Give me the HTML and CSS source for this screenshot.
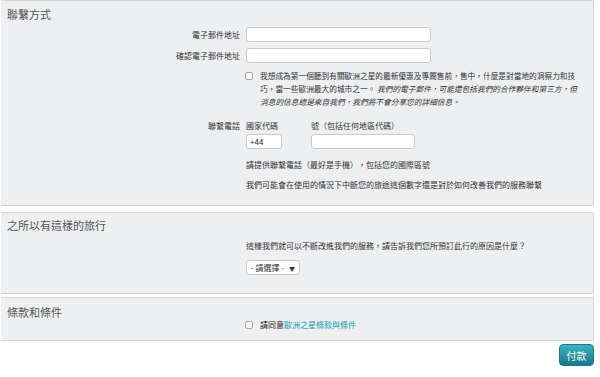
FILE: index.html
```html
<!DOCTYPE html>
<html lang="zh-Hant">
<head>
  <meta charset="UTF-8">
  <title>聯繫方式</title>
  <meta name="viewport" content="width=device-width, initial-scale=1.0">
  <link rel="stylesheet" href="styles.css">
</head>
<body>
  <div class="page">
    <section class="panel panel-contact">
      <h2>聯繫方式</h2>

      <div class="row">
        <label class="row-label" for="email">電子郵件地址</label>
        <input type="text" id="email" class="field field-wide">
      </div>

      <div class="row">
        <label class="row-label" for="email2">確認電子郵件地址</label>
        <input type="text" id="email2" class="field field-wide">
      </div>

      <div class="row row-top optin">
        <span class="row-label"></span>
        <span class="box"></span>
        <p class="optin-text">我想成為第一個聽到有關歐洲之星的最新優惠及專屬售前，售中，什麼是對當地的洞察力和技<br>巧，當一些歐洲最大的城市之一。 <em>我們的電子郵件，可能還包括我們的合作夥伴和第三方，但<br>消息的信息總是來自我們，我們將不會分享您的詳細信息。</em></p>
      </div>

      <div class="row row-top phone">
        <span class="row-label phone-label">聯繫電話</span>
        <div class="phone-col">
          <span class="small-label">國家代碼</span>
          <input type="text" class="field field-code" value="+44">
        </div>
        <div class="phone-col">
          <span class="small-label">號（包括任何地區代碼）</span>
          <input type="text" class="field field-number">
        </div>
      </div>

      <p class="note note-first">請提供聯繫電話（最好是手機），包括您的國際區號</p>
      <p class="note">我們可能會在使用的情況下中斷您的旅途這個數字還是對於如何改善我們的服務聯繫</p>
    </section>

    <section class="panel panel-reason">
      <h2>之所以有這樣的旅行</h2>
      <p class="note">這樣我們就可以不斷改進我們的服務，請告訴我們您所預訂此行的原因是什麼？</p>
      <div class="select">- 請選擇 - <span class="caret">▼</span></div>
    </section>

    <section class="panel panel-terms">
      <h2>條款和條件</h2>
      <div class="terms">
        <span class="box"></span>
        <span class="terms-text">請同意<a href="#">歐洲之星條款與條件</a></span>
      </div>
    </section>

    <div class="actions">
      <button class="button">付款</button>
    </div>
  </div>
</body>
</html>
```

FILE: styles.css
```css
body {
  margin: 0;
  font-family: "Noto Sans CJK TC", "Noto Sans", sans-serif;
  color: #333;
  background: #fff;
}

.page {
  width: 593px;
  margin-left: 1px;
}

.panel {
  background-color: #eeeff1;
  border: 1px solid #d4d5d7;
  border-left: none;
  box-sizing: border-box;
}

.panel h2 {
  margin: 0;
  padding-left: 6px;
  font-size: 11px;
  font-weight: normal;
  line-height: 14px;
  color: #555;
}

.panel-contact {
  height: 206px;
  padding-top: 6px;
}

.panel-reason {
  height: 82px;
  margin-top: 6px;
  padding-top: 5px;
}

.panel-terms {
  height: 44px;
  margin-top: 3px;
  padding-top: 7px;
}

.row {
  display: flex;
  align-items: center;
  margin-top: 6px;
  font-size: 8px;
}

.row-label {
  width: 245px;
  flex: none;
  text-align: right;
  padding-right: 6px;
  box-sizing: border-box;
  color: #333;
}

.row-top {
  align-items: flex-start;
}

.field {
  height: 15px;
  border: 1px solid #c9c9c9;
  border-radius: 3px;
  background: #fff;
  box-sizing: border-box;
  font-family: inherit;
  font-size: 8px;
  padding: 0 3px;
  color: #222;
}

.field-wide {
  width: 185px;
}

.box {
  width: 8px;
  height: 8px;
  flex: none;
  border: 1px solid #aaa;
  border-radius: 2px;
  background: #f7f7f7;
  box-sizing: border-box;
}

.optin {
  margin-top: 6px;
}

.optin .row-label {
  width: 244px;
}

.optin .box {
  margin-top: 3px;
}

.optin-text {
  margin: 0 0 0 7px;
  line-height: 13px;
  font-size: 7.7px;
  white-space: nowrap;
}

.optin-text em {
  font-style: italic;
}

.phone {
  margin-top: 12px;
}

.phone-label {
  line-height: 12px;
}

.phone-col {
  display: flex;
  flex-direction: column;
  margin-right: 29px;
}

.small-label {
  line-height: 12px;
  margin-bottom: 2px;
}

.field-code {
  width: 36px;
}

.field-number {
  width: 104px;
}

.note {
  margin: 0 0 0 245px;
  font-size: 8px;
  line-height: 12px;
}

.note-first {
  margin-top: 10px;
  margin-bottom: 8px;
}

.panel-reason .note {
  margin-top: 8px;
}

.select {
  display: inline-block;
  margin: 4px 0 0 245px;
  height: 15px;
  line-height: 13px;
  padding: 0 4px;
  border: 1px solid #c9c9c9;
  border-radius: 3px;
  background: #fff;
  font-size: 8px;
  box-sizing: border-box;
}

.caret {
  font-size: 6px;
  margin-left: 3px;
}

.terms {
  display: flex;
  align-items: center;
  margin: 0 0 0 244px;
  font-size: 8px;
}

.terms-text {
  margin-left: 7px;
  color: #222;
}

.terms a {
  color: #1b9fb6;
  text-decoration: none;
}

.actions {
  display: flex;
  justify-content: flex-end;
  padding-top: 3px;
}

.button {
  width: 35px;
  height: 22px;
  padding: 0;
  border: 1px solid #1b7885;
  border-radius: 4px;
  background: linear-gradient(#3ab3c2, #167987);
  color: #fff;
  font-family: inherit;
  font-size: 10px;
  cursor: pointer;
}
```
